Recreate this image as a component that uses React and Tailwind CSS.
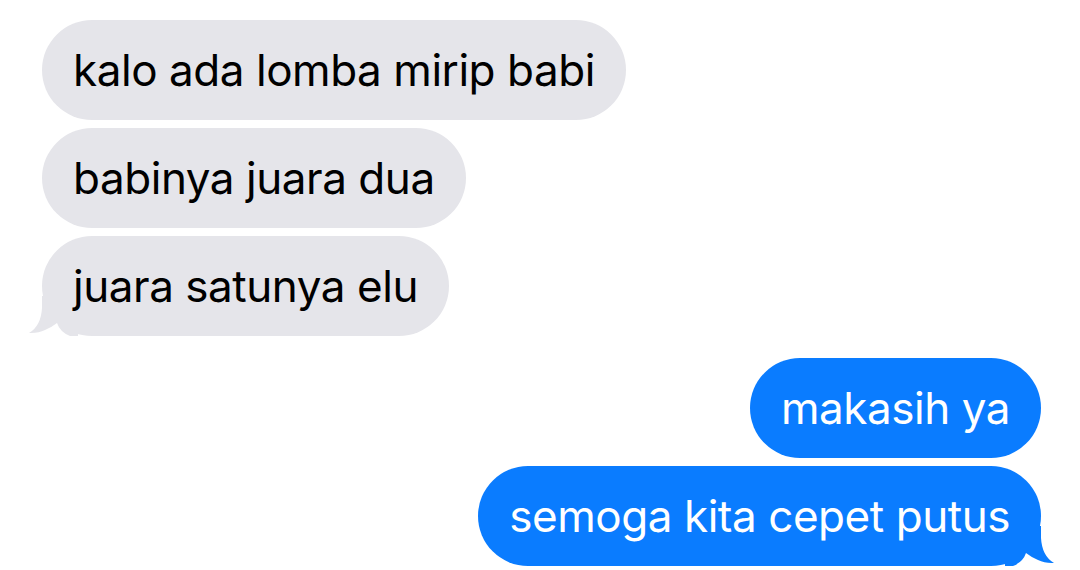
const Tail = ({ color, side }) => (
  <svg
    className={side === "left" ? "absolute left-[-14px] bottom-0" : "absolute right-[-14px] bottom-0 -scale-x-100"}
    width="50"
    height="40"
    viewBox="0 0 50 40"
  >
    <path d="M14 0 L14 12 Q13 30 1 37 Q10 37.5 17 34 Q24 31 29 27 Q32 36 42 40 L50 40 L50 0 Z" fill={color} />
  </svg>
);

const Bubble = ({ text, mine, tail }) => (
  <div
    className={
      "relative h-[100px] flex items-center px-[31px] rounded-[50px] text-[44px] tracking-[-0.45px] " +
      (mine ? "bg-[#0a7cff] text-white" : "bg-[#e5e5ea] text-black")
    }
  >
    {tail && <Tail color={mine ? "#0a7cff" : "#e5e5ea"} side={mine ? "right" : "left"} />}
    <span className="relative">{text}</span>
  </div>
);

export default function App() {
  return (
    <div className="w-[1080px] h-[570px] bg-white overflow-hidden font-['Inter','Liberation_Sans',sans-serif]">
      <div className="flex flex-col items-start gap-2 pl-[42px] pt-5">
        <Bubble text="kalo ada lomba mirip babi" />
        <Bubble text="babinya juara dua" />
        <Bubble text="juara satunya elu" tail />
      </div>
      <div className="flex flex-col items-end gap-2 pr-[39px] mt-[22px]">
        <Bubble text="makasih ya" mine />
        <Bubble text="semoga kita cepet putus" mine tail />
      </div>
    </div>
  );
}
